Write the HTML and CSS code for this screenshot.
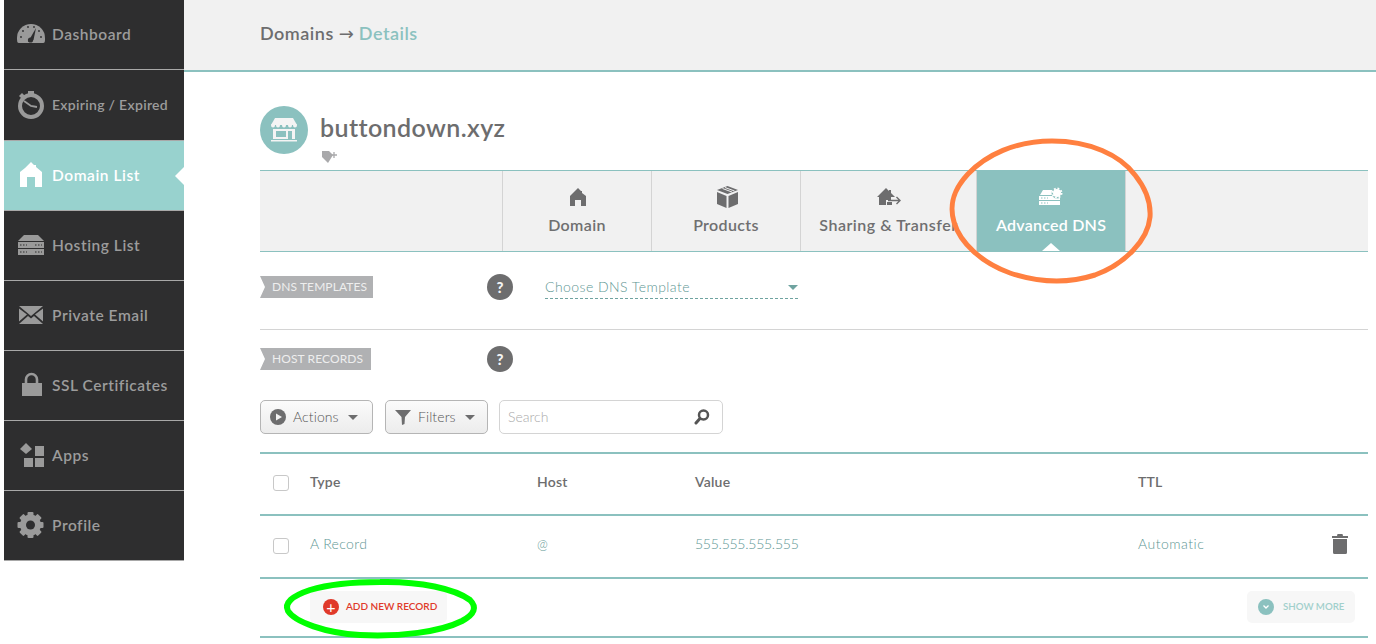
FILE: index.html
```html
<!DOCTYPE html>
<html lang="en">
<head>
<meta charset="utf-8">
<title>Domains - Details</title>
<link rel="stylesheet" href="styles.css">
</head>
<body>
<div class="app">
  <nav class="sidebar">
    <a class="nav-item"><svg class="nav-icon" viewBox="0 0 28 28"><path fill="#9a9a9a" d="M2 22C0 22 0 20 0 17A14 14 0 0 1 28 17C28 20 28 22 26 22Z"/><path fill="#2e2e2f" d="M11 21 L19 7 L16.5 19 Z"/><circle cx="13.5" cy="19" r="2.6" fill="#2e2e2f"/><g fill="#2e2e2f"><circle cx="4" cy="16" r=".9"/><circle cx="6" cy="10" r=".9"/><circle cx="11" cy="6" r=".9"/><circle cx="17" cy="6" r=".9"/><circle cx="24" cy="16" r=".9"/><circle cx="22" cy="10" r=".9"/></g></svg><span>Dashboard</span></a>
    <a class="nav-item nav-tall"><svg class="nav-icon" viewBox="0 0 28 28"><circle cx="14" cy="15" r="11" fill="none" stroke="#9a9a9a" stroke-width="4"/><rect x="11" y="0" width="6" height="3" fill="#9a9a9a"/><path d="M2 5 L5 2 L8 5 L5 8Z" fill="#9a9a9a"/><path d="M7 10 L14 15 L20 16" fill="none" stroke="#9a9a9a" stroke-width="1.8"/></svg><span class="small">Expiring / Expired</span></a>
    <a class="nav-item active"><svg class="nav-icon" viewBox="0 0 28 28"><path fill="#fff" d="M14 0 L17 3 H19 V5 L25 10 V25 H18 V15 H10 V25 H3 V10 L8 6 Z"/></svg><span>Domain List</span></a>
    <a class="nav-item"><svg class="nav-icon" viewBox="0 0 28 28"><path fill="#9a9a9a" d="M7 3H21L27 9H1Z"/><rect x="1" y="10" width="26" height="6" fill="#9a9a9a"/><rect x="1" y="17" width="26" height="6" fill="#9a9a9a"/><path stroke="#2e2e2f" stroke-width="1.2" stroke-dasharray="1.5 1.5" d="M3 13H10M18 13H25M3 20H10M18 20H25"/></svg><span>Hosting List</span></a>
    <a class="nav-item"><svg class="nav-icon" viewBox="0 0 28 28"><path fill="#9a9a9a" d="M2 4H26L14 14ZM2 6.5V19.5L10 12.5ZM26 6.5V19.5L18 12.5ZM2 22 L11 14 L14 16.5 L17 14 L26 22Z"/></svg><span>Private Email</span></a>
    <a class="nav-item"><svg class="nav-icon" viewBox="0 0 28 28"><path fill="none" stroke="#9a9a9a" stroke-width="2.6" d="M9 12V7.5A5.5 5.5 0 0 1 20 7.5V12"/><rect x="5" y="11" width="20" height="13" fill="#9a9a9a"/></svg><span>SSL Certificates</span></a>
    <a class="nav-item"><svg class="nav-icon" viewBox="0 0 28 28"><path fill="#9a9a9a" d="M9 1 L15 7 L9 12 L3 7Z"/><rect x="18" y="4" width="9" height="10" fill="#9a9a9a"/><rect x="7" y="16" width="9" height="9" fill="#9a9a9a"/><rect x="18" y="16" width="9" height="9" fill="#9a9a9a"/></svg><span>Apps</span></a>
    <a class="nav-item"><svg class="nav-icon" viewBox="0 0 28 28"><circle cx="13.5" cy="13" r="7.5" fill="none" stroke="#9a9a9a" stroke-width="6"/><g fill="#9a9a9a"><rect x="10.5" y="0" width="6" height="26" rx="1"/><rect x="10.5" y="0" width="6" height="26" rx="1" transform="rotate(45 13.5 13)"/><rect x="10.5" y="0" width="6" height="26" rx="1" transform="rotate(90 13.5 13)"/><rect x="10.5" y="0" width="6" height="26" rx="1" transform="rotate(135 13.5 13)"/></g><circle cx="13.5" cy="13" r="4.5" fill="#2e2e2f"/></svg><span>Profile</span></a>
  </nav>

  <div class="content">
    <header class="topbar">Domains <span class="arrow">→</span> <span class="crumb">Details</span></header>
    <main class="main">
      <div class="domain-head">
        <div class="avatar"><svg viewBox="0 0 28 28" width="28" height="28"><path fill="#f4f4f4" d="M5 2H23L27 9H1Z"/><g fill="#f4f4f4"><circle cx="3" cy="9.500" r="2"/><circle cx="8" cy="9.500" r="2"/><circle cx="14" cy="9.500" r="2"/><circle cx="20" cy="9.500" r="2"/><circle cx="25" cy="9.500" r="2"/></g><path fill="#f4f4f4" fill-rule="evenodd" d="M3 13H25V23H3ZM6 15V21H16V15ZM18 15V23H22V15Z"/><rect x="1" y="24" width="26" height="1.500" fill="#f4f4f4"/></svg></div>
        <div class="domain-title">
          <h1>buttondown.xyz</h1>
          <svg class="tag-icon" viewBox="0 0 18 14" width="18" height="14"><path fill="#a9a9ab" d="M1 1H8L12 5 7 13 1 7Z"/><path stroke="#a9a9ab" stroke-width="1.300" d="M13 2V8M10 5H16"/></svg>
        </div>
      </div>

      <div class="tabs">
        <div class="tab tab-empty"></div>
        <div class="tab"><svg viewBox="0 0 24 22" width="24" height="22"><path fill="#6d6d6e" d="M13 2 L16 5 H17 V7 L21 10 V20 H16 V14 H10 V20 H5 V10Z"/></svg><span>Domain</span></div>
        <div class="tab"><svg viewBox="0 0 24 22" width="24" height="22"><path fill="#6d6d6e" d="M13.500 0 L24 4 L13.500 8 L3 4Z"/><path fill="#6d6d6e" d="M3 6 L12.500 10 V22 L3 18ZM24 6 L14.500 10 V22 L24 18Z"/><path stroke="#f1f1f1" d="M8.500 2.500 L18 6M11 1.500 L20.500 5"/></svg><span>Products</span></div>
        <div class="tab tab-wide"><svg viewBox="0 0 24 22" width="24" height="22"><path fill="#6d6d6e" d="M9 2 L12 5 V4 H14 V7 L18 11 H0Z"/><path fill="#6d6d6e" d="M2 11 H14 V14 H9 V19 H2ZM10 16 H15 V19 H10Z"/><path fill="none" stroke="#6d6d6e" stroke-width="1.400" d="M11 14.500H23M19.500 11 L23 14.500 19.500 18"/></svg><span>Sharing &amp; Transfer</span></div>
        <div class="tab tab-active"><svg viewBox="0 0 24 22" width="24" height="22"><path fill="#fff" d="M4 4H15L19 9H1Z"/><rect x="0" y="10" width="21" height="4" fill="#fff"/><rect x="0" y="15" width="21" height="4" fill="#fff"/><path stroke="#8bc1bf" stroke-width="1" stroke-dasharray="1.500 1.500" d="M2 12H9M2 17H9"/><circle cx="18" cy="7" r="5.500" fill="#8bc1bf"/><circle cx="18" cy="7" r="4" fill="#fff"/><circle cx="18" cy="7" r="4.600" fill="none" stroke="#fff" stroke-width="1.800" stroke-dasharray="1.800 1.800"/></svg><span>Advanced DNS</span></div>
        <div class="tab tab-rest"></div>
      </div>

      <section class="row row-templates">
        <div class="label label-dns">DNS TEMPLATES</div>
        <div class="help">?</div>
        <div class="select"><span>Choose DNS Template</span><i class="select-caret"></i></div>
      </section>
      <section class="row row-host">
        <div class="label label-host">HOST RECORDS</div>
        <div class="help">?</div>
      </section>

      <div class="toolbar">
        <button class="btn btn-actions"><svg viewBox="0 0 16 16" width="16" height="16"><circle cx="8" cy="8" r="8" fill="#6d6d6e"/><path fill="#f3f3f3" d="M6 4.500 L12 8 6 11.500Z"/></svg><span>Actions</span><i class="caret"></i></button>
        <button class="btn btn-filters"><svg viewBox="0 0 16 16" width="16" height="16"><path fill="#6d6d6e" d="M0 1H16L10 8 9.500 15 7 16 6.500 8Z"/></svg><span>Filters</span><i class="caret"></i></button>
        <div class="search"><span>Search</span><svg viewBox="0 0 16 16" width="16" height="16"><circle cx="9.500" cy="6" r="4.500" fill="none" stroke="#555" stroke-width="2.500"/><path stroke="#555" stroke-width="3" stroke-linecap="round" d="M5.500 10 L2 14"/></svg></div>
      </div>

      <div class="records">
        <div class="rec rec-head">
          <i class="check"></i><div>Type</div><div>Host</div><div>Value</div><div>TTL</div><div></div>
        </div>
        <div class="rec rec-body">
          <i class="check"></i><div>A Record</div><div class="at">@</div><div class="ip">555.555.555.555</div><div class="ttl">Automatic</div>
          <svg class="trash" viewBox="0 0 16 20" width="16" height="20"><path fill="#6d6d6e" d="M5.500 0H10.500L11 2H16V4H0V2H5ZM1 5H15V18.500Q15 20 13.500 20H2.500Q1 20 1 18.500Z"/></svg>
        </div>
        <div class="rec-foot">
          <button class="pill pill-add"><i class="dot dot-red">+</i><span>ADD NEW RECORD</span></button>
          <button class="pill pill-more"><i class="dot dot-teal"><svg viewBox="0 0 8 6" width="8" height="6"><path fill="none" stroke="#fff" stroke-width="1.300" d="M1.500 1.500 L4 4 6.500 1.500"/></svg></i><span>SHOW MORE</span></button>
        </div>
      </div>
    </main>
  </div>
</div>
<svg class="annotations" viewBox="0 0 1376 644" width="1376" height="644">
  <path class="mark-orange" d="M1052 141C1090 141 1120 155 1135 175C1147 190 1151 203 1150 217C1148 240 1125 264 1095 275C1070 283 1040 283 1010 273C982 263 960 243 954 222C949 205 953 190 968 174C986 155 1015 141 1052 141Z"/>
  <path class="mark-green" d="M380 582C420 581 455 589 470 600C477 607 475 614 462 621C440 632 400 637 360 635C325 633 295 622 288 611C284 603 292 596 310 590C330 584 355 582 380 582Z"/>
</svg>
</body>
</html>
```
FILE: styles.css
```css
* { box-sizing: border-box; }
html, body { margin: 0; padding: 0; height: 644px; overflow: hidden; background: #fff; }
body { position: relative; font-family: Lato, "Open Sans", sans-serif; color: #6d6d6e; }
.app { display: flex; align-items: flex-start; height: 644px; padding-left: 4px; }

.sidebar { width: 180px; flex: none; background: #2e2e2f; }
.nav-item { display: flex; align-items: center; height: 70px; border-bottom: 1px solid #a8a8a8; color: #9c9c9c; font-size: 15.500px; font-weight: 600; letter-spacing: .55px; position: relative; }
.nav-item span { padding-bottom: 2px; }
.nav-tall { height: 71px; }
.nav-item .small { font-size: 14px; letter-spacing: .3px; }
.nav-icon { width: 28px; height: 28px; margin: 0 7px 0 13px; flex: none; }
.nav-item.active { background: #98d2ce; color: #fff; }
.nav-item.active::after { content: ""; position: absolute; right: 0; top: 26px; border: 9px solid transparent; border-right-color: #fff; border-left-width: 0; }

.content { flex: 1; min-width: 0; }
.topbar { height: 72px; background: #f1f1f1; border-bottom: 2px solid #8bc1bf; padding: 21px 0 0 76px; font-size: 18px; font-weight: 600; color: #6d6d6e; line-height: 24px; letter-spacing: .5px; }
.crumb { color: #8bc1bf; }
.arrow { font-family: "DejaVu Sans", sans-serif; font-weight: 400; font-size: 18px; letter-spacing: 0; }
.main { padding: 34px 8px 0 76px; }

.domain-head { display: flex; height: 64px; }
.avatar { width: 48px; height: 48px; border-radius: 50%; background: #8bc1bf; display: flex; align-items: center; justify-content: center; }
.domain-title { margin-left: 12px; padding-top: 6px; }
.domain-title h1 { margin: 0; font-size: 25px; line-height: 31px; font-weight: 600; color: #6d6d6e; letter-spacing: .4px; }
.tag-icon { display: block; margin: 7px 0 0 1px; }

.tabs { display: flex; height: 82px; background: #f1f1f1; border-top: 1px solid #8bc1bf; border-bottom: 1px solid #8bc1bf; }
.tab { width: 149px; flex: none; display: flex; flex-direction: column; align-items: center; padding-top: 15px; border-right: 1px solid #d4d4d4; font-size: 16px; font-weight: 600; color: #6f6f70; letter-spacing: .35px; }
.tab span { margin-top: 6px; line-height: 22px; white-space: nowrap; }
.tab-empty { width: 243px; }
.tab-wide { width: 175px; border-right: 0; letter-spacing: .5px; }
.tab-active { background: #8bc1bf; color: #fff; width: 150px; position: relative; border-left: 1px solid #d4d4d4; border-right: 1px solid #d4d4d4; letter-spacing: .25px; }
.tab-active::after { content: ""; position: absolute; left: 50%; margin-left: -9px; bottom: 0; border: 8px solid transparent; border-top: 0; border-left-width: 9px; border-right-width: 9px; border-bottom-color: #fff; }
.tab-rest { flex: 1; border-right: 0; }

.row { display: flex; align-items: flex-start; position: relative; }
.row-templates { height: 78px; padding-top: 24px; border-bottom: 1px solid #d4d4d4; }
.row-host { height: 70px; padding-top: 18px; }
.label { height: 22px; line-height: 22px; background: #b0b1b3; color: #eee; font-size: 12px; padding-left: 12px; clip-path: polygon(0 0, 100% 0, 100% 100%, 0 100%, 5px 50%); letter-spacing: .1px; }
.label-dns { width: 113px; margin-right: 114px; }
.label-host { width: 111px; margin-right: 116px; }
.help { width: 26px; height: 26px; margin-top: -2px; border-radius: 50%; background: #6d6d6e; color: #f4f4f4; text-align: center; font-size: 15px; line-height: 26px; font-weight: 900; }
.select { width: 253px; height: 23px; margin-left: 32px; border-bottom: 1px dashed #6fa3a0; color: #5d9693; font-size: 14px; font-weight: 300; line-height: 22px; display: flex; justify-content: space-between; align-items: center; letter-spacing: .45px; }
.select-caret { border: 5px solid transparent; border-bottom: 0; border-top-color: #6fa3a0; }

.toolbar { display: flex; gap: 12px; height: 34px; }
.btn { height: 34px; border: 1px solid #b5b5b5; border-radius: 5px; background: linear-gradient(#fbfbfb, #ececec); font: 300 14px Lato, sans-serif; color: #555; display: flex; align-items: center; padding: 0 0 0 9px; letter-spacing: .1px; }
.btn span { padding-bottom: 2px; }
.btn svg { margin-right: 7px; flex: none; }
.btn-actions { width: 113px; }
.btn-filters { width: 103px; }
.caret { border: 5px solid transparent; border-bottom: 0; border-top-color: #6d6d6e; margin-left: 9px; }
.search { width: 224px; height: 34px; margin-left: -1px; border: 1px solid #d4d4d4; border-radius: 5px; display: flex; justify-content: space-between; align-items: center; padding: 0 12px 0 8px; color: #aaa; font-size: 14px; font-weight: 300; }
.search span { padding-bottom: 2px; }

.records { margin-top: 18px; }
.rec { display: grid; grid-template-columns: 50px 227px 158px 443px 1fr 36px; align-items: center; font-size: 14px; }
.rec-head { height: 64px; border-top: 2px solid #8bc1bf; border-bottom: 2px solid #8bc1bf; font-weight: 600; color: #6d6d6e; padding-bottom: 6px; letter-spacing: .2px; }
.rec-body { height: 63px; border-bottom: 2px solid #8bc1bf; color: #5d9693; font-weight: 300; letter-spacing: .35px; padding-bottom: 6px; }
.rec-body .ip { letter-spacing: -.25px; }
.rec-body .ttl { letter-spacing: .5px; }
.at { font-size: 13px; }
.check { width: 16px; height: 16px; margin-left: 13px; margin-top: 4px; border: 1px solid #c8c8c8; border-radius: 3px; background: #fff; display: block; }
.trash { justify-self: start; margin-top: 1px; }
.rec-foot { display: flex; justify-content: space-between; height: 59px; padding: 12px 13px 0 50px; border-bottom: 2px solid #8bc1bf; }
.pill { height: 32px; border: 0; border-radius: 5px; background: #f7f7f7; display: flex; align-items: center; font: 600 10px Lato, sans-serif; padding: 0 0 0 13px; letter-spacing: 0; }
.pill span { padding-bottom: 2px; }
.pill-add { width: 137px; color: #e0392a; }
.pill-more { width: 108px; padding-left: 11px; color: #a2d0cc; font-size: 9.700px; }
.dot { width: 16px; height: 16px; border-radius: 50%; display: flex; align-items: center; justify-content: center; font-style: normal; color: #fff; flex: none; }
.dot-red { background: #e0392a; font-size: 16px; font-weight: 400; line-height: 16px; margin-right: 7px; }
.dot-teal { background: #8bc1bf; margin-right: 9px; }

.annotations { position: absolute; left: 0; top: 0; pointer-events: none; }
.mark-orange { fill: none; stroke: #ff8040; stroke-width: 5; }
.mark-green { fill: none; stroke: #00ff00; stroke-width: 6; }
```
